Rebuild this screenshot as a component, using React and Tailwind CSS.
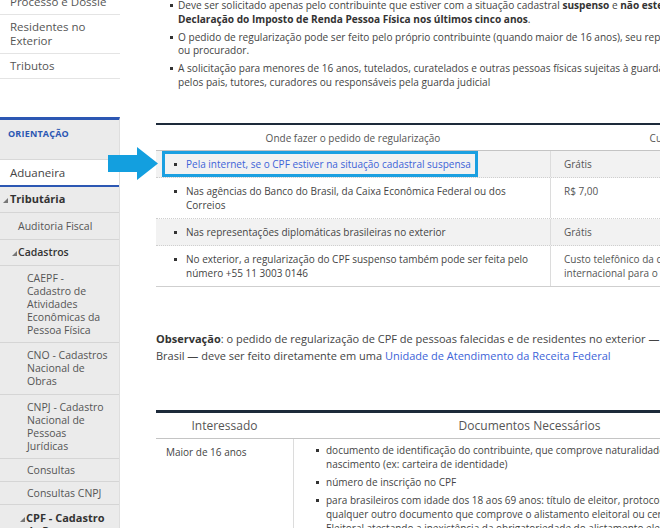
import React from "react";

const Tri = ({ className = "" }) => (
  <svg width="5" height="5" viewBox="0 0 5 5" className={"shrink-0 " + className}>
    <polygon points="5,0 5,5 0,5" fill="#777" />
  </svg>
);

const Bullet = ({ className = "" }) => (
  <span className={"inline-block w-[3px] h-[3px] bg-[#333] shrink-0 " + className} />
);

function Sidebar() {
  const upper = [["Processo e Dossiê"], ["Residentes no", "Exterior"], ["Tributos"]];
  const sub = [
    { lines: ["CAEPF -", "Cadastro de", "Atividades", "Econômicas da", "Pessoa Física"], py: "pt-[6px] pb-[5px]" },
    { lines: ["CNO - Cadastros", "Nacional de", "Obras"], py: "py-[6px]" },
    { lines: ["CNPJ - Cadastro", "Nacional de", "Pessoas", "Jurídicas"], py: "pt-[6px] pb-[5px]" },
    { lines: ["Consultas"], py: "py-[4.5px]" },
    { lines: ["Consultas CNPJ"], py: "pt-[4.5px] pb-[4px]" },
  ];
  return (
    <aside className="w-[120px] shrink-0">
      <div className="bg-white">
        {upper.map((lines, i) => (
          <div key={i} className="pl-[10px] py-[5px] text-[11.5px] leading-[14px] text-[#555] border-b border-[#e4e4e4]">
            {lines.map((l, j) => (
              <div key={j}>{l}</div>
            ))}
          </div>
        ))}
      </div>
      <div className="mt-[38px] bg-[#ebebeb] border-t-[3px] border-[#2c57b3] border-r border-r-[#dedede] h-[500px]">
        <div className="pl-[8px] pt-[8px] pb-[19px] text-[9px] leading-[12px] font-bold tracking-[0.2px] text-[#2c57b3] border-b border-[#d8d8d8]">
          ORIENTAÇÃO
        </div>
        <div className="bg-white pl-[10px] py-[5px] text-[11.5px] leading-[15px] text-[#444] border-b-2 border-[#2c57b3]">
          Aduaneira
        </div>
        <div className="flex items-center pl-[3px] pt-[5px] pb-[6px] text-[11px] leading-[14px] font-bold text-[#333] border-b border-[#d5d5d5]">
          <Tri className="mr-[2px] mt-[2px]" />
          Tributária
        </div>
        <div className="pl-[18px] pt-[7px] pb-[6px] text-[10.5px] leading-[13px] text-[#555] border-b border-[#d5d5d5]">
          Auditoria Fiscal
        </div>
        <div className="flex items-center pl-[12px] py-[6px] text-[10.5px] leading-[13px] font-semibold text-[#333] border-b border-[#d5d5d5]">
          <Tri className="mr-[1px] mt-[2px]" />
          Cadastros
        </div>
        {sub.map((s, i) => (
          <div key={i} className={"pl-[27px] text-[10.5px] leading-[13px] text-[#555] border-b border-[#d5d5d5] " + s.py}>
            {s.lines.map((l, j) => (
              <div key={j}>{l}</div>
            ))}
          </div>
        ))}
        <div className="flex items-start pl-[20px] py-[6px] text-[11px] leading-[13px] font-bold text-[#333]">
          <Tri className="mr-[1px] mt-[6px]" />
          <div>
            <div>CPF - Cadastro</div>
            <div>de Pessoas</div>
          </div>
        </div>
      </div>
    </aside>
  );
}

function TopList() {
  const items = [
    [
      <>
        Deve ser solicitado apenas pelo contribuinte que estiver com a situação cadastral <b className="font-bold text-[#333]">suspenso</b> e{" "}
        <b className="font-bold text-[#333]">não esteve obrigado a entregar a</b>
      </>,
      <>
        <b className="font-bold text-[#333]">Declaração do Imposto de Renda Pessoa Física nos últimos cinco anos</b>.
      </>,
    ],
    [
      "O pedido de regularização pode ser feito pelo próprio contribuinte (quando maior de 16 anos), seu representante legal",
      "ou procurador.",
    ],
    [
      "A solicitação para menores de 16 anos, tutelados, curatelados e outras pessoas físicas sujeitas à guarda, tutela ou curatela deve ser feita",
      "pelos pais, tutores, curadores ou responsáveis pela guarda judicial",
    ],
  ];
  return (
    <ul className="flex flex-col gap-[4.5px] text-[10.1px] leading-[13.5px] text-[#444]">
      {items.map((lines, i) => (
        <li key={i} className="flex pl-[14px]">
          <Bullet className="mt-[5px] mr-[5px]" />
          <div className="whitespace-nowrap">
            {lines.map((l, j) => (
              <div key={j}>{l}</div>
            ))}
          </div>
        </li>
      ))}
    </ul>
  );
}

function Table1() {
  const rows = [
    { bg: "bg-[#f2f2f2]", a: ["Pela internet, se o CPF estiver na situação cadastral suspensa"], b: ["Grátis"], link: true },
    { bg: "bg-white", a: ["Nas agências do Banco do Brasil, da Caixa Econômica Federal ou dos", "Correios"], b: ["R$ 7,00"] },
    { bg: "bg-[#f2f2f2]", a: ["Nas representações diplomáticas brasileiras no exterior"], b: ["Grátis"] },
    {
      bg: "bg-white",
      a: ["No exterior, a regularização do CPF suspenso também pode ser feita pelo", "número +55 11 3003 0146"],
      b: ["Custo telefônico da chamada", "internacional para o Brasil"],
      last: true,
    },
  ];
  return (
    <div className="w-[620px] mt-[34px] border-t-2 border-[#1d2a3a] text-[10px] leading-[14px]">
      <div className="grid grid-cols-[394px_226px] border-b border-[#c4c4c4] text-[#555]">
        <div className="text-center pt-[5.5px] pb-[5.5px]">Onde fazer o pedido de regularização</div>
        <div className="text-center pt-[5.5px] pb-[5.5px]">Custo</div>
      </div>
      {rows.map((r, i) => (
        <div
          key={i}
          className={
            "grid grid-cols-[394px_226px] " +
            r.bg +
            " " +
            (r.last ? "border-b border-[#cfcfcf]" : "border-b border-dotted border-[#cfcfcf]")
          }
        >
          <div className="relative flex pl-[18px] py-[6px]">
            <Bullet className="mt-[5.5px] mr-[9px]" />
            <div className={"whitespace-nowrap " + (r.link ? "text-[#3d63d8]" : "text-[#444]")}>
              {r.a.map((l, j) => (
                <div key={j}>{l}</div>
              ))}
            </div>
            {r.link && (
              <>
                <div className="absolute top-0 bottom-0 left-[6px] w-[316px] border-[3px] border-[#1ba0e1]" />
                <svg
                  className="absolute left-[-48px] top-[-4px]"
                  width="50"
                  height="33"
                  viewBox="0 0 50 33"
                >
                  <polygon points="0,8 29,8 29,0 50,16.5 29,33 29,25 0,25" fill="#139fdf" />
                </svg>
              </>
            )}
          </div>
          <div className="border-l border-[#dcdcdc] pl-[13px] py-[6px] text-[#555] whitespace-nowrap">
            {r.b.map((l, j) => (
              <div key={j}>{l}</div>
            ))}
          </div>
        </div>
      ))}
    </div>
  );
}

function Table2() {
  const items = [
    ["documento de identificação do contribuinte, que comprove naturalidade, filiação e data de", "nascimento (ex: carteira de identidade)"],
    ["número de inscrição no CPF"],
    [
      "para brasileiros com idade dos 18 aos 69 anos: título de eleitor, protocolo de alistamento eleitoral ou",
      "qualquer outro documento que comprove o alistamento eleitoral ou certidão da Justiça",
      "Eleitoral atestando a inexistência da obrigatoriedade do alistamento eleitoral",
    ],
  ];
  return (
    <div className="w-[610px] mt-[46px] border-t-[3px] border-[#1d2a3a]">
      <div className="grid grid-cols-[137px_473px] border-b border-[#c4c4c4] text-[12px] leading-[17px] text-[#555]">
        <div className="text-center py-[4px]">Interessado</div>
        <div className="text-center py-[4px]">Documentos Necessários</div>
      </div>
      <div className="grid grid-cols-[137px_473px] text-[10px] leading-[14px] text-[#444]">
        <div className="pl-[10px] pt-[6px]">Maior de 16 anos</div>
        <div className="border-l border-[#dcdcdc] pl-[22px] pt-[4px] h-[120px]">
          <ul className="flex flex-col gap-[4px]">
            {items.map((lines, i) => (
              <li key={i} className="flex">
                <Bullet className="mt-[5.5px] mr-[7px]" />
                <div className="whitespace-nowrap">
                  {lines.map((l, j) => (
                    <div key={j}>{l}</div>
                  ))}
                </div>
              </li>
            ))}
          </ul>
        </div>
      </div>
    </div>
  );
}

export default function App() {
  return (
    <div className="relative w-[660px] h-[528px] overflow-hidden bg-white font-['Open_Sans','Liberation_Sans',sans-serif]">
      <div className="flex -mt-[10px]">
        <Sidebar />
        <main className="flex-1 min-w-0 pl-[36px] pt-[9px]">
          <TopList />
          <Table1 />
          <p className="mt-[43px] w-[700px] text-[11px] leading-[17px] text-[#444] whitespace-nowrap">
            <b className="font-bold text-[#333]">Observação</b>: o pedido de regularização de CPF de pessoas falecidas e de residentes no exterior — que não possuam representante no
            <br />
            Brasil — deve ser feito diretamente em uma <span className="text-[#3d63d8]">Unidade de Atendimento da Receita Federal</span>
          </p>
          <Table2 />
        </main>
      </div>
    </div>
  );
}
